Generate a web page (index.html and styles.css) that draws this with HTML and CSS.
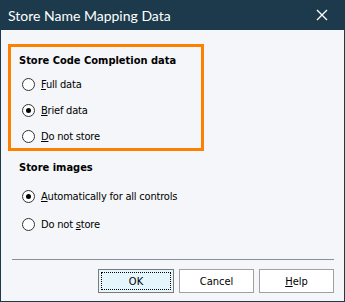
FILE: index.html
```html
<!DOCTYPE html>
<html>
<head>
    <title>Store Name Mapping Data</title>
    <link rel="stylesheet" href="styles.css">
</head>
<body>
    <div class="window">
        <div class="titlebar">
            <span class="title">Store Name Mapping Data</span>
            <span class="close">
                <svg width="12" height="12" viewBox="0 0 12 12">
                    <path d="M1 1 L11 11 M11 1 L1 11" stroke="#fff" stroke-width="1.4" fill="none"/>
                </svg>
            </span>
        </div>
        <div class="content">
            <div class="group highlight">
                <div class="group-title">Store Code Completion data</div>
                <label class="radio"><span class="dot"></span><span><u>F</u>ull data</span></label>
                <label class="radio"><span class="dot checked"></span><span><u>B</u>rief data</span></label>
                <label class="radio"><span class="dot"></span><span><u>D</u>o not store</span></label>
            </div>
            <div class="group images">
                <div class="group-title">Store images</div>
                <label class="radio wide"><span class="dot checked"></span><span><u>A</u>utomatically for all controls</span></label>
                <label class="radio wide"><span class="dot"></span><span>Do not <u>s</u>tore</span></label>
            </div>
        </div>
        <div class="footer">
            <div class="separator"></div>
            <div class="buttons">
                <button class="btn default"><span class="focus">OK</span></button>
                <button class="btn">Cancel</button>
                <button class="btn"><u>H</u>elp</button>
            </div>
        </div>
    </div>
</body>
</html>
```

FILE: styles.css
```css
html, body {
    margin: 0;
    padding: 0;
}
body {
    font-family: "DejaVu Sans Condensed", "DejaVu Sans", Tahoma, sans-serif;
    font-size: 11px;
    color: #000;
}
.window {
    width: 345px;
    height: 302px;
    box-sizing: border-box;
    border: 1px solid #1c3a4c;
    border-top: none;
    background-color: #f4f6f9;
    display: flex;
    flex-direction: column;
}
.titlebar {
    height: 30px;
    margin: 0 -1px;
    background-color: #1c3a4c;
    color: #fff;
    display: flex;
    align-items: center;
    justify-content: space-between;
    padding: 0 17px 0 8px;
    font-family: Lato, "Open Sans", sans-serif;
    font-size: 14px;
}
.close {
    display: flex;
    align-items: center;
}
.content {
    padding: 14px 0 0 7px;
    flex: 1;
}
.group {
    width: 196px;
    box-sizing: border-box;
    border: 3px solid transparent;
    padding: 6px 0 0 8px;
}
.group.highlight {
    border-color: #ff8000;
    height: 107px;
}
.group-title {
    font-weight: bold;
    height: 16px;
    line-height: 16px;
    margin-bottom: 2px;
}
.images .group-title {
    margin-bottom: 6px;
}
.radio {
    display: flex;
    align-items: center;
    height: 26px;
    padding-left: 3px;
    white-space: nowrap;
    letter-spacing: -0.2px;
}
.radio.wide {
    height: 28px;
}
.dot {
    width: 13px;
    height: 13px;
    box-sizing: border-box;
    border: 1px solid #333;
    border-radius: 50%;
    background-color: #fff;
    margin-right: 6px;
    display: flex;
    align-items: center;
    justify-content: center;
}
.dot.checked::after {
    content: "";
    width: 5px;
    height: 5px;
    border-radius: 50%;
    background-color: #000;
}
.footer {
    padding: 0 10px 8px 11px;
}
.separator {
    height: 1px;
    background-color: #8a9099;
    margin-bottom: 9px;
}
.buttons {
    display: flex;
    justify-content: flex-end;
    gap: 5px;
}
.btn {
    width: 75px;
    height: 24px;
    border: 1px solid #a0a0a0;
    background-color: #fff;
    font-family: "DejaVu Sans Condensed", "DejaVu Sans", Tahoma, sans-serif;
    font-size: 11px;
    color: #000;
    padding: 0;
}
.btn.default {
    width: 76px;
    background-color: #e5f5fc;
    border-color: #7a7a7a;
    padding: 2px;
}
.focus {
    display: flex;
    align-items: center;
    justify-content: center;
    height: 100%;
    box-sizing: border-box;
    border: 1px dotted #000;
}
```
